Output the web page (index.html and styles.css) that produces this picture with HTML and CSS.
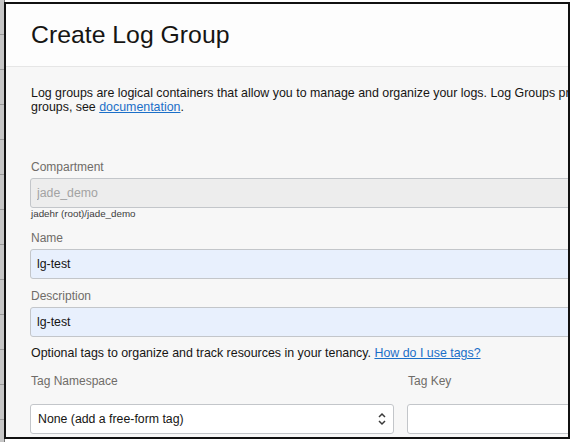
FILE: index.html
```html
<!DOCTYPE html>
<html lang="en">
<head>
  <meta charset="UTF-8" />
  <title>Create Log Group</title>
  <link rel="stylesheet" href="styles.css">
</head>
<body>
  <div class="backdrop-edge"></div>

  <div class="frame">
    <div class="modal">
      <header class="modal-header">
        <h1>Create Log Group</h1>
      </header>

      <div class="modal-body">
        <p class="intro">Log groups are logical containers that allow you to manage and organize your logs. Log Groups provide access control for the logs they contain. To learn more about log<br>groups, see <a href="#">documentation</a>.</p>

        <div class="field first">
          <label class="field-label">Compartment</label>
          <input class="input disabled" type="text" value="jade_demo" readonly>
          <div class="hint">jadehr (root)/jade_demo</div>
        </div>

        <div class="field">
          <label class="field-label">Name</label>
          <input class="input filled" type="text" value="lg-test">
        </div>

        <div class="field description">
          <label class="field-label">Description</label>
          <input class="input filled" type="text" value="lg-test">
        </div>

        <p class="tags-note">Optional tags to organize and track resources in your tenancy. <a href="#">How do I use tags?</a></p>

        <div class="tag-row">
          <div class="tag-col">
            <label class="field-label">Tag Namespace</label>
            <div class="select">
              <span>None (add a free-form tag)</span>
              <svg width="8" height="14" viewBox="0 0 8 14">
                <path d="M1 5 L4 2 L7 5" fill="none" stroke="#3a3a3a" stroke-width="1.5" />
                <path d="M1 9 L4 12 L7 9" fill="none" stroke="#3a3a3a" stroke-width="1.5" />
              </svg>
            </div>
          </div>
          <div class="tag-col">
            <label class="field-label">Tag Key</label>
            <input class="input plain" type="text" value="">
          </div>
        </div>
      </div>
    </div>
  </div>
</body>
</html>
```

FILE: styles.css
```css
* {
  box-sizing: border-box;
}

body {
  margin: 0;
  height: 442px;
  overflow: hidden;
  display: flex;
  align-items: flex-start;
  font-family: "Liberation Sans", Arial, sans-serif;
  color: #161513;
  background-color: #fff;
  background-image:
    repeating-linear-gradient(to bottom, transparent 0 31px, #dedede 31px 32px, transparent 32px 29.5px),
    repeating-linear-gradient(to right, transparent 0 88px, #e2e2e2 88px 89px);
  background-size: 100% 29.5px, 88px 100%;
  background-position: 0 2px, 1px 0;
}

.backdrop-edge {
  width: 5px;
  height: 100%;
  flex-shrink: 0;
  background-color: #c6c6c6;
  background-image: repeating-linear-gradient(to bottom, transparent 0 34px, #9a9a9a 34px 35px);
  border-right: 1px solid #777;
}

.frame {
  width: 566px;
  height: 437px;
  margin-top: 2px;
  margin-left: -1px;
  border: 2px solid #111;
  overflow: hidden;
  flex-shrink: 0;
  background: #f7f7f7;
}

.modal {
  width: 1300px;
  background: #f7f7f7;
}

.modal-header {
  background: #fdfdfd;
  border-bottom: 1px solid #e6e6e6;
  padding: 16px 25px;
}

.modal-header h1 {
  margin: 0;
  font-size: 24.8px;
  line-height: 30px;
  font-weight: 400;
  color: #161513;
}

.modal-body {
  padding: 19px 24px 0 24px;
}

.intro {
  margin: 0 0 46px 1px;
  font-size: 12.4px;
  line-height: 14px;
  color: #161513;
}

a {
  color: #1b6fc8;
  text-decoration: underline;
}

.field {
  margin-top: 11px;
}

.field.first {
  margin-top: 0;
}

.field.description {
  margin-top: 10px;
}

.field-label {
  display: block;
  margin: 0 0 4px 1px;
  font-size: 12px;
  line-height: 14px;
  color: #6f6c68;
}

.input {
  display: block;
  width: 760px;
  height: 30px;
  margin: 0;
  padding: 0 6px;
  border: 1px solid #c3c6ca;
  border-radius: 3px;
  font-family: "Liberation Sans", Arial, sans-serif;
  font-size: 12.3px;
  color: #161513;
  background: #fff;
  outline: none;
}

.input.disabled {
  background: #ededed;
  color: #a3a3a3;
}

.input.filled {
  background: #e8f0fd;
}

.hint {
  margin-left: 1px;
  font-size: 9.8px;
  line-height: 12px;
  color: #3c3c3c;
}

.tags-note {
  margin: 9px 0 0 1px;
  font-size: 12.4px;
  line-height: 15px;
  color: #161513;
}

.tag-row {
  display: grid;
  grid-template-columns: 364px 364px;
  gap: 13px;
  margin-top: 13px;
}

.tag-row .field-label {
  margin-bottom: 16px;
}

.tag-row .input {
  width: 100%;
}

.select {
  display: flex;
  align-items: center;
  justify-content: space-between;
  height: 30px;
  padding: 0 7px 0 7px;
  border: 1px solid #c3c6ca;
  border-radius: 3px;
  background: #fff;
  font-size: 12.3px;
  color: #161513;
}
```
